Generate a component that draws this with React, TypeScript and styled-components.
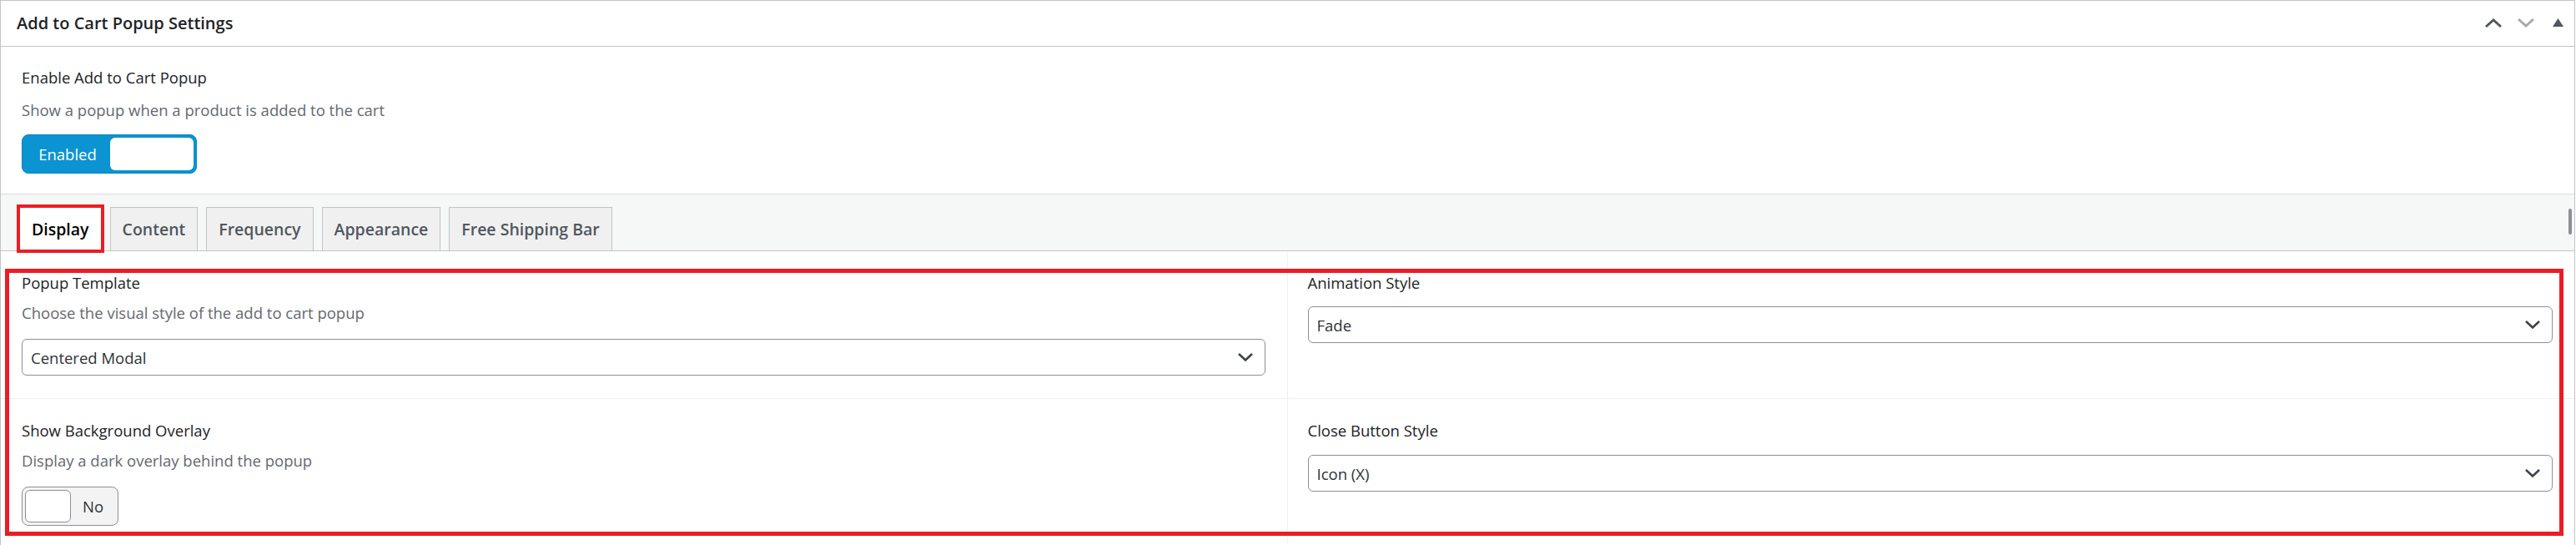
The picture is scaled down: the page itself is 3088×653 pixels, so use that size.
import React from 'react';
import styled, { createGlobalStyle, css } from 'styled-components';

const GlobalStyle = createGlobalStyle`
  body {
    margin: 0;
    background: #ffffff;
    font-family: "Open Sans", "Noto Sans", Arial, sans-serif;
    color: #1d2327;
  }
`;

const Postbox = styled.div`
  width: 3087px;
  box-sizing: border-box;
  border: 1px solid #c3c4c7;
  background: #fff;
`;

const Header = styled.div`
  display: flex;
  align-items: center;
  height: 54px;
  border-bottom: 1px solid #c3c4c7;
  padding-left: 19px;
`;

const Title = styled.h2`
  flex: 1;
  margin: 0;
  font-size: 20px;
  font-weight: 600;
  color: #1d2327;
  line-height: 1.4;
`;

const HandleActions = styled.div`
  display: flex;
  align-items: center;
  height: 100%;
`;

const HandleButton = styled.span`
  display: flex;
  align-items: center;
  justify-content: center;
  width: 39px;
  height: 100%;
  padding-bottom: 2px;
  box-sizing: border-box;
`;

const Section = styled.div`
  padding: 23px 25px 24px;
  border-bottom: 1px solid #dcdcde;
`;

const Field = styled.div`
  display: flex;
  flex-direction: column;
  align-items: flex-start;
`;

const Label = styled.div`
  font-size: 18.5px;
  line-height: 28px;
  color: #1d2327;
`;

const Description = styled.div<{ $gap?: number }>`
  margin-top: ${(p) => p.$gap ?? 8}px;
  font-size: 18.5px;
  line-height: 28px;
  color: #646970;
`;

const Toggle = styled.div<{ $on?: boolean }>`
  display: flex;
  align-items: center;
  box-sizing: border-box;
  height: 47px;
  padding: 3px;
  border-radius: 8px;
  margin-top: ${(p) => (p.$on ? 15 : 17)}px;
  font-size: 18.5px;

  ${(p) => p.$on
    ? css`
      width: 210px;
      background: #0c93d1;
      border: 1px solid #0a86c0;
      color: #fff;
      flex-direction: row;
    `
    : css`
      width: 116px;
      background: #f3f3f4;
      border: 1px solid #8c8f94;
      color: #2c3338;
      flex-direction: row-reverse;
    `}
`;

const ToggleText = styled.span`
  flex: 1;
  text-align: center;
`;

const Knob = styled.span<{ $on?: boolean }>`
  display: block;
  height: 39px;
  background: #fff;
  border-radius: 6px;
  box-sizing: border-box;
  ${(p) => p.$on
    ? css`width: 100px;`
    : css`width: 55px; border: 1px solid #8c8f94;`}
`;

const TabBar = styled.div`
  display: flex;
  align-items: flex-end;
  gap: 10px;
  background: #f6f7f7;
  padding: 15px 0 0 22px;
  border-bottom: 1px solid #c3c4c7;
`;

const Tab = styled.div<{ $active?: boolean; $highlighted?: boolean }>`
  display: flex;
  align-items: center;
  height: 52px;
  box-sizing: border-box;
  padding: 0 14px;
  border: 1px solid #c3c4c7;
  border-bottom: none;
  background: #f0f0f1;
  color: #50575e;
  font-size: 19.5px;
  font-weight: 600;

  ${(p) => p.$active && css`
    background: #fff;
    color: #000;
    border-color: #dcdcde;
  `}

  ${(p) => p.$highlighted && css`
    outline: 4px solid #ed1c24;
    outline-offset: -1px;
  `}
`;

const ScrollThumb = styled.span`
  align-self: flex-start;
  margin: 2px 3px 0 auto;
  width: 4px;
  height: 31px;
  border-radius: 2px;
  background: #8c8f94;
`;

const Panel = styled.div`
  position: relative;
`;

const SettingsGrid = styled.div`
  display: grid;
  grid-template-columns: 1fr 1fr;
`;

const Cell = styled.div<{ $left?: boolean }>`
  display: flex;
  flex-direction: column;
  padding: 24px 26px 27px ${(p) => (p.$left ? 25 : 24)}px;
  border-bottom: 1px solid #f0f0f1;
  ${(p) => p.$left && css`
    border-right: 1px solid #f0f0f1;
  `}
`;

const Select = styled.div<{ $gap?: number }>`
  display: flex;
  align-items: center;
  justify-content: space-between;
  box-sizing: border-box;
  height: 44px;
  margin-top: ${(p) => p.$gap ?? 17}px;
  padding: 0 13px 0 10px;
  border: 1px solid #8c8f94;
  border-radius: 6px;
  font-size: 18.5px;
  color: #2c3338;
  background: #fff;
`;

const Highlight = styled.div`
  position: absolute;
  left: 5px;
  right: 13px;
  top: 21px;
  height: 320px;
  box-sizing: border-box;
  border: 5px solid #ed1c24;
  pointer-events: none;
`;

const ChevronDown = ({ color = '#3c434a' }: { color?: string }) => (
  <svg width="20" height="12" viewBox="0 0 20 12">
    <path d="M2 2 L10 9.5 L18 2" fill="none" stroke={color} strokeWidth="2.6" />
  </svg>
);

const ChevronUp = ({ color }: { color: string }) => (
  <svg width="22" height="13" viewBox="0 0 22 13">
    <path d="M2 11 L11 3 L20 11" fill="none" stroke={color} strokeWidth="3" />
  </svg>
);

const Triangle = () => (
  <svg width="13" height="10" viewBox="0 0 13 10">
    <path d="M6.5 0 L13 10 L0 10 Z" fill="#50575e" />
  </svg>
);

const tabs = ['Display', 'Content', 'Frequency', 'Appearance', 'Free Shipping Bar'];

export default function App() {
  return (
    <>
      <GlobalStyle />
      <Postbox>
        <Header>
          <Title>Add to Cart Popup Settings</Title>
          <HandleActions>
            <HandleButton><ChevronUp color="#50575e" /></HandleButton>
            <HandleButton>
              <svg width="22" height="13" viewBox="0 0 22 13">
                <path d="M2 2 L11 10 L20 2" fill="none" stroke="#a7aaad" strokeWidth="3" />
              </svg>
            </HandleButton>
            <HandleButton><Triangle /></HandleButton>
          </HandleActions>
        </Header>

        <Section>
          <Field>
            <Label>Enable Add to Cart Popup</Label>
            <Description $gap={11}>Show a popup when a product is added to the cart</Description>
            <Toggle $on>
              <ToggleText>Enabled</ToggleText>
              <Knob $on />
            </Toggle>
          </Field>
        </Section>

        <TabBar>
          {tabs.map((tab, i) => (
            <Tab key={tab} $active={i === 0} $highlighted={i === 0}>{tab}</Tab>
          ))}
          <ScrollThumb />
        </TabBar>

        <Panel>
          <SettingsGrid>
            <Cell $left>
              <Label>Popup Template</Label>
              <Description>Choose the visual style of the add to cart popup</Description>
              <Select>
                <span>Centered Modal</span>
                <ChevronDown />
              </Select>
            </Cell>
            <Cell>
              <Label>Animation Style</Label>
              <Select $gap={14}>
                <span>Fade</span>
                <ChevronDown />
              </Select>
            </Cell>
            <Cell $left>
              <Label>Show Background Overlay</Label>
              <Description>Display a dark overlay behind the popup</Description>
              <Field>
                <Toggle>
                  <ToggleText>No</ToggleText>
                  <Knob />
                </Toggle>
              </Field>
            </Cell>
            <Cell>
              <Label>Close Button Style</Label>
              <Select $gap={15}>
                <span>Icon (X)</span>
                <ChevronDown />
              </Select>
            </Cell>
          </SettingsGrid>
          <Highlight />
        </Panel>
      </Postbox>
    </>
  );
}
